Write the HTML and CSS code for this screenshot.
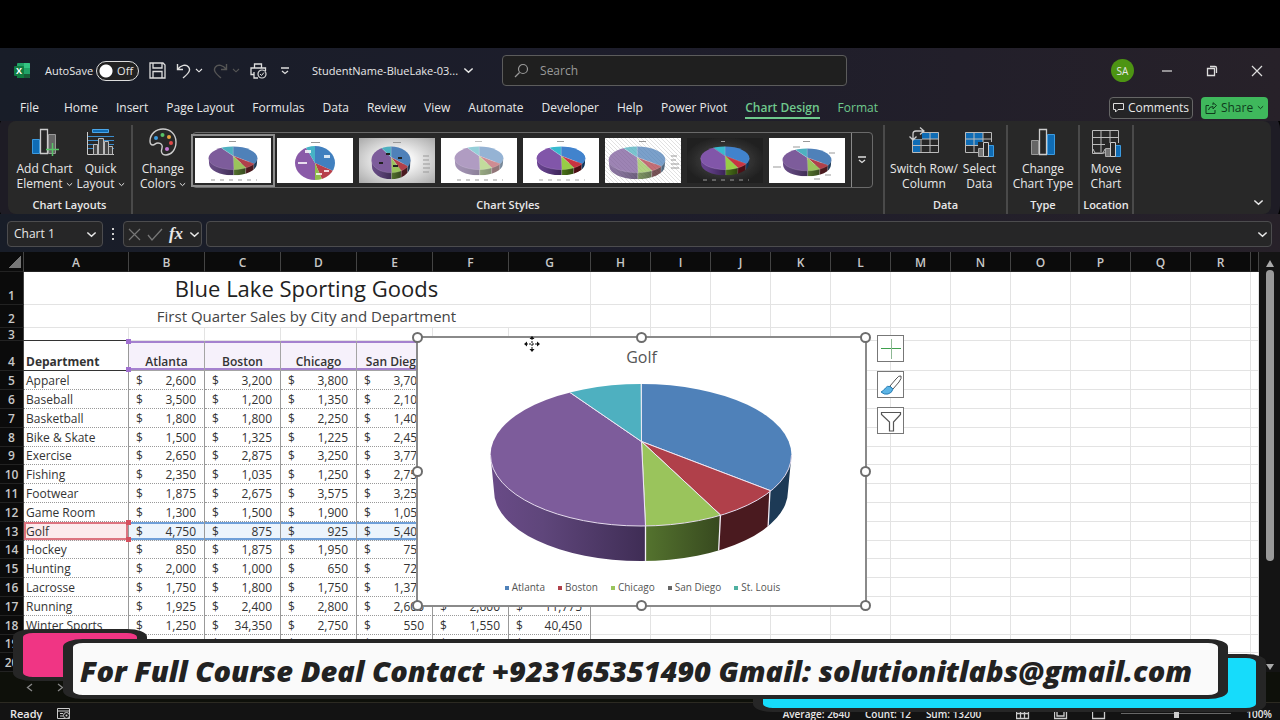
FILE: index.html
```html
<!DOCTYPE html>
<html lang="en">
<head>
<meta charset="utf-8">
<title>StudentName-BlueLake-03 - Excel</title>
<link rel="stylesheet" href="styles.css">
</head>
<body>
<svg class="defs" aria-hidden="true">
  <defs>
    <clipPath id="top"><ellipse cx="224" cy="118" rx="150.5" ry="71"/></clipPath>
    <clipPath id="side"><path d="M73.500 118L77 154A147 70 0 0 0 371 154L374.500 118Z"/></clipPath>
    <clipPath id="disc"><ellipse cx="20" cy="17" rx="20" ry="17"/></clipPath>
    <linearGradient id="gp"><stop offset="0" stop-color="#6a4b88"/><stop offset=".35" stop-color="#5f467b"/><stop offset="1" stop-color="#3f2d55"/></linearGradient>
    <linearGradient id="gg"><stop offset="0" stop-color="#54732e"/><stop offset="1" stop-color="#37491f"/></linearGradient>
    <pattern id="hatch" width="4" height="4" patternUnits="userSpaceOnUse"><path d="M0 0L4 4" stroke="#d4d4d4" stroke-width=".7"/></pattern>
    <symbol id="pie" viewBox="70 44 308 184" preserveAspectRatio="none">
      <g clip-path="url(#side)">
        <path fill="url(#gp)" d="M70 100H228.500V230H70Z"/>
        <path fill="url(#gg)" d="M228.500 150H303.500L301.500 230H228.500Z"/>
        <path fill="#4a1a1f" d="M303.500 140H353L351 230H301.500Z"/>
        <path fill="#1d3a56" d="M353 100H380V230H351Z"/>
        <path stroke="#f3eef6" stroke-width="1.300" fill="none" d="M228.500 189V226M303.500 178L301.500 216M353 153L351 192"/>
      </g>
      <g clip-path="url(#top)" stroke="#efe8f4" stroke-width="1">
        <path fill="#4f81b9" d="M224.500 104.500V40H400V189L353 153.500Z"/>
        <path fill="#b0404a" d="M224.500 104.500L353 153.500L390 182L330 230L303.500 178Z"/>
        <path fill="#9ac45c" d="M224.500 104.500L303.500 178L330 215V240H229.500L228.500 189Z"/>
        <path fill="#7d5c9b" d="M224.500 104.500L228.500 189L229.500 240H50V20H130L153 55.500Z"/>
        <path fill="#4eb0c0" d="M224.500 104.500L153 55.500L130 20H224Z"/>
      </g>
      <ellipse cx="224" cy="118" rx="150.500" ry="71" fill="none" stroke="#e6dcee" stroke-width="1" pathLength="100" stroke-dasharray="50 50"/>
    </symbol>
    <symbol id="flat" viewBox="0 0 40 34">
      <g clip-path="url(#disc)">
        <path fill="#4180bf" d="M20 17V-5H50V30Z"/><path fill="#b8404b" d="M20 17L50 30L32 45Z"/>
        <path fill="#90bd4c" d="M20 17L32 45H20Z"/><path fill="#8a5aa8" d="M20 17V45H-10V-10H4Z"/><path fill="#46b3c6" d="M20 17L4-10H20Z"/>
      </g>
      <g fill="#fff" opacity=".8"><path d="M3 16h9v2H3zM29 9h6v3h-6zM10 4h6v3h-6zM21 27h6v2h-6zM29 24h5v2h-5z"/></g>
    </symbol>
    <symbol id="chev" viewBox="0 0 8 5"><path d="M1 1L4 3.800L7 1" fill="none" stroke="currentColor" stroke-width="1.100"/></symbol>
    <symbol id="bars" viewBox="0 0 16 16"><path fill="#777" stroke="#aaa" d="M.5 7.500h5v8h-5z"/><path fill="#0f6cb5" stroke="#3c9be0" d="M10.500 4.500h5v11h-5z"/><path fill="#282828" stroke="#ccc" d="M5.500 1.500h5v14h-5z"/></symbol>
  </defs>
</svg>

<header class="titlebar">
  <svg class="logo" width="16" height="16" viewBox="0 0 16 16"><rect x="3" width="13" height="15" rx="1" fill="#21a366"/><path fill="#33c481" d="M10 0h5q1 0 1 1v4h-6z"/><path fill="#107c41" d="M3 8h7v7H4q-1 0-1-1z"/><path fill="#185c37" d="M10 11h6v3q0 1-1 1h-5z"/><rect y="3" width="10" height="10" rx="1" fill="#107c41"/><text x="2" y="11" font-size="9">X</text></svg>
  <label class="autosave" for="autosave">AutoSave</label>
  <span class="switch"><input type="checkbox" role="switch" id="autosave"><span aria-hidden="true">Off</span></span>
  <button class="ib save" aria-label="Save"><svg width="17" height="17" viewBox="0 0 17 17"><path fill="none" stroke="#ddd" stroke-width="1.300" d="M1 1h13l2 2v13H1zM4 1v5h9V1M4 16V9.500h9V16"/></svg></button>
  <button class="ib undo" aria-label="Undo"><svg width="15" height="16" viewBox="0 0 15 16"><path fill="none" stroke="#ddd" stroke-width="1.400" d="M1.500 1v5.500h5.500M1.500 6.500C5 2 10 1 12.500 4S13 10 7 15"/></svg><svg width="8" height="5"><use href="#chev"/></svg></button>
  <button class="ib redo" aria-label="Redo" disabled><svg width="15" height="16" viewBox="0 0 15 16"><path fill="none" stroke="currentColor" stroke-width="1.400" d="M13.500 1v5.500h-5.500M13.500 6.500C10 2 5 1 2.500 4S2 10 8 15"/></svg><svg width="8" height="5"><use href="#chev"/></svg></button>
  <button class="ib print" aria-label="Print preview"><svg width="17" height="16" viewBox="0 0 17 16"><path fill="none" stroke="#ddd" stroke-width="1.300" d="M4.500 5V1h7v4M4 11.500H1V5h14.500v3M4 9v6h4"/><circle cx="12" cy="11" r="4" fill="#1b1f2a" stroke="#ddd" stroke-width="1.200"/><path fill="none" stroke="#ddd" d="M10 11l1.500 1.500L14 9.500"/></svg></button>
  <button class="ib more" aria-label="Customize Quick Access Toolbar"><svg width="8" height="8" viewBox="0 0 8 8"><path stroke="#ddd" fill="none" stroke-width="1.300" d="M0 1h8M1 4l3 2.500L7 4"/></svg></button>
  <button class="filename">StudentName-BlueLake-03... <svg width="11" height="7"><use href="#chev"/></svg></button>
  <label class="search"><svg width="15" height="15" viewBox="0 0 15 15"><circle cx="9" cy="6" r="4.500" fill="none" stroke="#999" stroke-width="1.200"/><path stroke="#999" stroke-width="1.200" d="M5.500 9.500L1 14"/></svg><input type="text" placeholder="Search" aria-label="Search"></label>
  <span class="spacer"></span>
  <button class="avatar" aria-label="Account SA">SA</button>
  <button class="wb" aria-label="Minimize"><svg width="12" height="12"><path stroke="#ddd" stroke-width="1.200" d="M1 6h10"/></svg></button>
  <button class="wb" aria-label="Restore"><svg width="12" height="12" viewBox="0 0 12 12"><path fill="none" stroke="#ddd" stroke-width="1.300" d="M1.500 3.500h7v7h-7zM4 1.500h5q1.500 0 1.500 1.500v5"/></svg></button>
  <button class="wb" aria-label="Close"><svg width="12" height="12"><path stroke="#ddd" stroke-width="1.200" d="M1 1l10 10M11 1L1 11"/></svg></button>
</header>

<nav class="tabs">
  <a href="#" class="file">File</a><a href="#">Home</a><a href="#">Insert</a><a href="#">Page Layout</a><a href="#">Formulas</a><a href="#">Data</a><a href="#">Review</a><a href="#">View</a><a href="#">Automate</a><a href="#">Developer</a><a href="#">Help</a><a href="#">Power Pivot</a><a href="#" class="ctx on">Chart Design</a><a href="#" class="ctx">Format</a>
  <span class="spacer"></span>
  <button class="comments"><svg width="11" height="11" viewBox="0 0 11 11"><path fill="none" stroke="#ddd" d="M.5 1.500h10v6H5L2.500 10V7.500h-2z"/></svg>Comments</button>
  <button class="share"><svg width="12" height="12" viewBox="0 0 12 12"><path fill="none" stroke="#0f3a1c" d="M4 3.500H1v8h9V8M3.500 8Q4 4.500 8 4.500V7l3.500-3.500L8 .7V3"/></svg>Share<svg width="7" height="5"><use href="#chev"/></svg></button>
</nav>

<section class="ribbon" aria-label="Chart Design">
  <div class="group layouts">
    <div class="cmds">
      <button class="cmd"><svg width="28" height="30" viewBox="0 0 28 30"><path fill="#0f6cb5" stroke="#3c9be0" d="M1.500 12.500h7v14h-7z"/><path fill="#666" stroke="#999" d="M17.500 7.500h7v19h-7z"/><path fill="#282828" stroke="#ccc" stroke-width="1.300" d="M9.500 2.500h7v24h-7z"/><path stroke="#57c466" stroke-width="1.500" d="M21.500 16v13M15 22.500h13"/></svg><span>Add Chart<br>Element <svg width="7" height="5"><use href="#chev"/></svg></span></button>
      <button class="cmd"><svg width="28" height="30" viewBox="0 0 28 30"><path fill="#0f6cb5" stroke="#4ba6e8" d="M5.500 2.500h16v3h-16z"/><path stroke="#3c8ccb" d="M1 9.500h26M1 13.500h26M1 17.500h26M1 21.500h26"/><path fill="none" stroke="#ccc" d="M.5 5v22.500H27"/><path fill="#444" stroke="#bbb" d="M6.500 17.500h4v10h-4zM11.500 11.500h5v16h-5zM17.500 14.500h4v13h-4zM21.500 19.500h4v8h-4z"/></svg><span>Quick<br>Layout <svg width="7" height="5"><use href="#chev"/></svg></span></button>
    </div>
    <h2>Chart Layouts</h2>
  </div>
  <div class="group styles">
    <div class="cmds">
      <button class="cmd colors"><svg width="28" height="30" viewBox="0 0 28 30"><path fill="none" stroke="#ccc" stroke-width="1.400" d="M1 14C1 7 7 2 14 2s13 5 13 13-5 13-10 13-5-4-4-7-1-5-4-5-3 2-5 2-3-1-3-4z"/><circle cx="7" cy="11" r="2" fill="#3c9be0"/><circle cx="13.500" cy="8" r="2" fill="#57c466"/><circle cx="20" cy="10" r="2" fill="#e8a33c"/><circle cx="22" cy="16" r="2" fill="#e04848"/><circle cx="18" cy="22" r="2" fill="#c679d6"/></svg><span>Change<br>Colors <svg width="7" height="5"><use href="#chev"/></svg></span></button>
      <div class="gallery">
        <button class="thumb on" aria-label="Style 1"><svg viewBox="0 0 76 45"><path class="cap" d="M34 3.500h7"/><use href="#pie" x="13" y="8" width="50" height="30"/><path class="leg" d="M16 42h46"/></svg></button>
        <button class="thumb" aria-label="Style 2"><svg viewBox="0 0 76 45"><path class="cap" d="M34 4.500h9"/><use href="#flat" x="18" y="8" width="40" height="34"/></svg></button>
        <button class="thumb silver" aria-label="Style 3"><svg viewBox="0 0 76 45"><path class="cap" d="M34 4.500h8"/><use href="#pie" x="12" y="8" width="40" height="34"/><path class="cap" d="M64 18h6M64 22h6M64 26h7M64 30h7M64 34h6"/><path stroke="#222" stroke-width="2" d="M20 25h4M27 16h4M39 20h4M34 28h5"/></svg></button>
        <button class="thumb" aria-label="Style 4"><svg viewBox="0 0 76 45"><g opacity=".6"><path class="cap" d="M34 3.500h7"/><use href="#pie" x="13" y="8" width="50" height="30"/></g><path class="leg" d="M16 42h46"/></svg></button>
        <button class="thumb vivid" aria-label="Style 5"><svg viewBox="0 0 76 45"><path class="cap" d="M34 3.500h7"/><use href="#pie" x="13" y="8" width="50" height="30"/><path class="leg" d="M16 42h46"/></svg></button>
        <button class="thumb" aria-label="Style 6"><svg viewBox="0 0 76 45"><path fill="url(#hatch)" d="M0 0h76v45H0z"/><path class="cap" d="M34 3.500h7"/><use href="#pie" x="3" y="8" width="58" height="34" opacity=".75"/><path class="cap" d="M66 18h6M66 22h5M66 26h8M66 30h8"/></svg></button>
        <button class="thumb night vivid" aria-label="Style 7"><svg viewBox="0 0 76 45"><path class="leg" d="M34 3.500h7M16 42h46"/><use href="#pie" x="13" y="8" width="50" height="30"/></svg></button>
        <button class="thumb" aria-label="Style 8"><svg viewBox="0 0 76 45"><path class="cap" d="M34 3.500h7"/><use href="#pie" x="13" y="10" width="50" height="29"/><path class="cap" d="M24 9h7M60 15h6M4 29h8M56 37h6M45 41h6"/></svg></button>
        <button class="expand" aria-label="More styles"><svg width="8" height="8" viewBox="0 0 8 8"><path stroke="#ddd" fill="none" stroke-width="1.300" d="M0 1h8M1 4l3 2.500L7 4"/></svg></button>
      </div>
    </div>
    <h2>Chart Styles</h2>
  </div>
  <div class="group data">
    <div class="cmds">
      <button class="cmd"><svg width="30" height="30" viewBox="0 0 30 30"><path fill="#0f6cb5" d="M4 5h26v7H11v13H4z"/><path fill="none" stroke="#bbb" d="M3.500 5.500h26v20h-26zM3.500 12h26M3.500 18.500h26M12 5v20M21 5v20"/><path fill="#282828" d="M0 0h13v12H0z"/><path fill="none" stroke="#ccc" stroke-width="1.300" d="M4 13V7q0-3 3-3h8M11 .5l4 3.500-4 3.500M.5 9.500L4 13l3.500-3.500"/></svg><span>Switch Row/<br>Column</span></button>
      <button class="cmd"><svg width="30" height="30" viewBox="0 0 30 30"><path fill="#0f6cb5" d="M1 5h18v14H1z"/><path fill="none" stroke="#bbb" d="M1.500 5.500h26v20h-26zM1.500 12h26M1.500 18.500h26M10 5v20M19 5v20"/><path fill="#282828" d="M14 15h16v15H14z"/><use href="#bars" x="14" y="14" width="16" height="16"/></svg><span>Select<br>Data</span></button>
    </div>
    <h2>Data</h2>
  </div>
  <div class="group type">
    <div class="cmds">
      <button class="cmd"><svg width="28" height="30" viewBox="0 0 28 30"><path fill="#666" stroke="#999" d="M2.500 13.500h7v14h-7z"/><path fill="#0f6cb5" stroke="#3c9be0" d="M18.500 7.500h7v20h-7z"/><path fill="#282828" stroke="#ccc" stroke-width="1.300" d="M10.500 2.500h7v25h-7z"/></svg><span>Change<br>Chart Type</span></button>
    </div>
    <h2>Type</h2>
  </div>
  <div class="group location">
    <div class="cmds">
      <button class="cmd"><svg width="30" height="30" viewBox="0 0 30 30"><path fill="none" stroke="#bbb" d="M1.500 3.500h26v22h-13l-3 1h-10zM1.500 10.500h26M1.500 17.500h26M10 3v22M19 3v22M2 22l2 4h8l2-4"/><path fill="#282828" d="M14 16h16v14H14z"/><use href="#bars" x="14" y="14" width="16" height="16"/></svg><span>Move<br>Chart</span></button>
    </div>
    <h2>Location</h2>
  </div>
  <span class="spacer"></span>
  <button class="collapse" aria-label="Collapse ribbon"><svg width="11" height="7"><use href="#chev"/></svg></button>
</section>

<section class="formulabar">
  <div class="namebox"><input type="text" value="Chart 1" aria-label="Name box"><svg width="11" height="7"><use href="#chev"/></svg></div>
  <svg class="dots" width="4" height="14" viewBox="0 0 4 14"><path fill="#ccc" d="M1 1h2v2H1zM1 6h2v2H1zM1 11h2v2H1z"/></svg>
  <div class="fx">
    <button aria-label="Cancel"><svg width="13" height="13"><path stroke="#777" stroke-width="1.200" d="M1 1l11 11M12 1L1 12"/></svg></button>
    <button aria-label="Enter"><svg width="16" height="13"><path fill="none" stroke="#777" stroke-width="1.300" d="M1 7l4 5L15 1"/></svg></button>
    <button class="fn" aria-label="Insert function">fx</button>
    <svg width="11" height="7"><use href="#chev"/></svg>
  </div>
  <div class="formula"><input type="text" aria-label="Formula bar"><svg width="11" height="7"><use href="#chev"/></svg></div>
</section>

<main class="sheet">
  <div class="grid">
    <table>
      <colgroup><col class="c-num"><col class="c-a"><col class="c-b" span="5"><col class="c-g"><col class="c-h" span="11"><col></colgroup>
      <thead><tr id="letters"></tr></thead>
      <tbody id="rows"></tbody>
    </table>
    <figure class="chart">
      <figcaption>Golf</figcaption>
      <svg class="plot" viewBox="70 44 308 184"><use href="#pie" x="70" y="44" width="308" height="184"/></svg>
      <ul><li class="k1">Atlanta</li><li class="k2">Boston</li><li class="k3">Chicago</li><li class="k4">San Diego</li><li class="k5">St. Louis</li></ul>
      <i class="h nw"></i><i class="h n"></i><i class="h ne"></i><i class="h w"></i><i class="h e"></i><i class="h sw"></i><i class="h s"></i><i class="h se"></i>
      <svg class="cursor" width="16" height="16" viewBox="0 0 16 16"><path stroke="#111" stroke-dasharray="2 1" d="M8 2v12M2 8h12"/><path fill="#111" d="M8 0l2.500 3h-5zM8 16l2.500-3h-5zM0 8l3-2.500v5zM16 8l-3-2.500v5z"/></svg>
      <div class="tools">
        <button aria-label="Chart elements"><svg width="24" height="24"><path stroke="#3fa04e" d="M2 11.500h20"/><path stroke="#8db894" d="M12.500 2v20"/></svg></button>
        <button aria-label="Chart styles"><svg width="24" height="24" viewBox="0 0 24 24"><path fill="#fff" stroke="#555" d="M22 3q-2-1-5 3l-6 7 3 3 6-7q3-4 2-6z"/><path fill="#5bb4e5" stroke="#2b7fb5" d="M11 13.500q-3-1-4.500 1.500T2 19q3 3 7 2t5-5z"/></svg></button>
        <button aria-label="Chart filters"><svg width="24" height="24"><path fill="none" stroke="#555" stroke-width="1.200" d="M2.500 3.500h19v2L14.500 13v9h-4v-9L2.500 5.500z"/></svg></button>
      </div>
    </figure>
  </div>
  <div class="scroll"><svg width="10" height="7"><path fill="#aaa" d="M5 0l4 7H1z"/></svg><span></span><svg class="down" width="8" height="6"><path fill="#aaa" d="M0 0h8L4 6z"/></svg></div>
</main>
<div class="sheettabs"><button aria-label="Previous sheet"><svg width="7" height="9"><path fill="none" stroke="#888" stroke-width="1.300" d="M6 1L1.500 4.500 6 8"/></svg></button><button aria-label="Next sheet"><svg width="7" height="9"><path fill="none" stroke="#888" stroke-width="1.300" d="M1 1l4.500 3.500L1 8"/></svg></button></div>
<footer class="status">
  <span class="ready">Ready</span>
  <svg width="14" height="12" viewBox="0 0 14 12"><path fill="none" stroke="#ccc" d="M.5.500h12v10H.500zM.500 3h12M3 5.500h3M3 8h3"/><circle cx="9.500" cy="7.500" r="3" fill="#151515" stroke="#ccc"/><circle cx="9.500" cy="7.500" r="1" fill="#ccc"/></svg>
  <span class="spacer"></span>
  <span>Average: 2640</span><span>Count: 12</span><span class="sum">Sum: 13200</span>
  <svg class="view" width="14" height="12"><path fill="none" stroke="#ccc" stroke-width="1.300" d="M.5.500h12v10H.500zM.500 5.500h12M4.500.500v10M8.500.500v10"/></svg>
  <svg class="view" width="14" height="12"><path fill="none" stroke="#ccc" stroke-width="1.300" d="M.5.500h12v10H.500zM3 3h7v5H3z"/></svg>
  <svg width="14" height="12"><path fill="none" stroke="#ccc" stroke-width="1.300" d="M.5.500h12v10H.500z"/></svg>
  <input type="range" aria-label="Zoom"><span>100%</span>
</footer>

<div class="banner">
  <div class="pink"></div><div class="cyan"></div>
  <p>For Full Course Deal Contact +923165351490 Gmail: solutionitlabs@gmail.com</p>
</div>
<script src="script.js"></script>
</body>
</html>
```

FILE: styles.css
```css
* { box-sizing: border-box; }
body { margin: 0; height: 100vh; overflow: hidden; display: flex; flex-direction: column; position: relative; padding-top: 48px; background: #000; color: #e8e8e8; font: 12px/18px "Open Sans", "Noto Sans", sans-serif; }
button, input { font: inherit; color: inherit; background: none; border: 0; padding: 0; margin: 0; min-width: 0; }
button { display: inline-flex; align-items: center; justify-content: center; white-space: nowrap; }
svg { display: block; flex: none; }
.defs { position: absolute; width: 0; height: 0; }
.spacer { flex: 1; }

.titlebar, .tabs, .formulabar { background: linear-gradient(90deg, #181d28, #1d1d2b 50%, #272129); display: flex; align-items: center; flex: none; }
.titlebar { height: 44px; padding: 1px 1px 0 14px; }
.logo { margin-right: 15px; }
.logo text { fill: #fff; font-weight: 700; }
.autosave { margin-right: 3px; font-size: 11px; font-weight: 500; }
.switch { position: relative; width: 43px; height: 20px; flex: none; }
.switch input { appearance: none; display: block; width: 43px; height: 20px; border: 1px solid #ddd; border-radius: 10px; background: radial-gradient(circle at 9px 9px, #fff 6px, #222 7px); }
.switch span { position: absolute; right: 6px; top: 1px; font-size: 11px; pointer-events: none; }
.ib { gap: 4px; }
.save { margin-left: 10px; }
.undo { margin-left: 10px; }
.redo { margin-left: 10px; color: #555; }
.print { margin-left: 10px; }
.more { margin-left: 14px; }
.filename { margin-left: 23px; gap: 5px; font-size: 11px; font-weight: 500; }
.search { display: flex; align-items: center; gap: 11px; width: 345px; height: 31px; margin-left: 28px; padding-left: 11px; border: 1px solid #5c5c5c; border-radius: 4px; background: #1f1f1f; }
.search input { flex: 1; }
.search input::placeholder { color: #999; opacity: 1; }
.avatar { width: 23px; height: 23px; border-radius: 50%; background: #4d9413; font-size: 10px; margin-right: 10px; }
.wb { width: 45px; height: 32px; }

.tabs { height: 29px; padding: 2px 12px 0 20px; gap: 18px; }
.tabs a { color: inherit; text-decoration: none; line-height: 18px; padding-top: 2px; border-bottom: 2px solid transparent; white-space: nowrap; }
.tabs .file { margin-right: 7px; }
.tabs .ctx { color: #6fc98d; }
.tabs .on { font-weight: 600; border-color: #6fc98d; }
.comments, .share { height: 22px; border-radius: 4px; gap: 4px; }
.comments { border: 1px solid #666; background: #242426; width: 84px; }
.share { background: #3fb85c; color: #0f3a1c; width: 67px; margin-left: -10px; }

.ribbon { flex: none; display: flex; height: 93px; margin: 0 9px 0 8px; border-radius: 8px; background: #282828; box-shadow: 0 0 0 9px #1e1c25; position: relative; clip-path: inset(0 -9px); }
.group { display: flex; flex-direction: column; flex: none; border-right: 2px solid #4a4a4a; margin-top: 4px; }
.group h2 { margin: auto 0 0; font-size: 11px; line-height: 18px; font-weight: 600; text-align: center; }
.cmds { display: flex; justify-content: center; padding-top: 2px; }
.cmd { flex-direction: column; line-height: 15px; }
.cmd > span { text-align: center; padding-top: 4px; }
.cmd span svg { display: inline-block; vertical-align: middle; }
.layouts { width: 125px; }
.layouts .cmds { gap: 4px; padding-left: 2px; }
.styles { width: 752px; }
.styles .cmds { justify-content: flex-start; padding-left: 7px; align-items: flex-start; gap: 6px; }
.gallery { display: flex; align-items: center; flex: none; height: 56px; margin-top: 5px; border: 1px solid #6a6a6a; border-radius: 4px; padding-left: 2px; }
.thumb { width: 76px; height: 45px; margin-right: 6px; background: #fff; flex: none; }
.thumb svg { width: 76px; height: 45px; }
.thumb.on { outline: 2px solid #8d8d8d; outline-offset: 2px; }
.silver { background: radial-gradient(#f5f5f5 30%, #a9a9a9); }
.night { background: radial-gradient(#555, #292929 75%); }
.vivid { filter: saturate(1.2) contrast(1.1); }
.cap, .leg { stroke: #999; stroke-width: 1; fill: none; }
.leg { stroke-dasharray: 4 5; }
.expand { width: 21px; align-self: stretch; border-left: 1px solid #8a8a8a; }
.data { width: 123px; }
.data .cmds { gap: 5px; padding-right: 5px; }
.type { width: 72px; }
.location { width: 54px; }
.collapse { align-self: flex-end; margin: 0 7px 8px 0; }

.formulabar { height: 38px; padding: 7px 8px 5px 7px; align-items: stretch; }
.namebox, .fx, .formula { display: flex; align-items: center; border: 1px solid #4c4c4e; border-radius: 4px; background: #262627; height: 26px; }
.namebox { width: 96px; padding: 0 5px 0 6px; }
.namebox input { flex: 1; }
.dots { margin: 6px 8px 0 8px; }
.fx { width: 79px; justify-content: space-between; padding: 0 1px 0 4px; }
.fn { font: italic 700 17px/20px "Liberation Serif", serif; }
.formula { flex: 1; margin-left: 4px; padding-right: 3px; }
.formula input { flex: 1; }

.sheet { flex: 1; min-height: 0; display: flex; background: #0c0c0c; }
.grid { flex: 1; position: relative; background: #fff; height: 100%; overflow: hidden; color: #333; }
table { width: 100%; table-layout: fixed; border-spacing: 0; line-height: 16px; }
.c-num { width: 24px; } .c-a { width: 105px; } .c-b { width: 76px; } .c-g { width: 82px; } .c-h { width: 60px; }
thead tr { height: 20px; }
th { background: #0b0b0b; color: #c8c8c8; font-weight: 600; padding: 0; border-right: 1px solid #444; border-bottom: 1px solid #222; }
thead th { padding-top: 2px; }
thead th:first-child { background: linear-gradient(135deg, #0b0b0b 50%, #777 50%) 9px 4px / 12px 12px no-repeat #0b0b0b; }
tbody th { vertical-align: bottom; line-height: 17px; font-size: 12px; }
td { padding: 0 8px 0 7px; border-right: 1px solid #e3e3e3; border-bottom: 1px solid #e3e3e3; position: relative; vertical-align: bottom; white-space: nowrap; }
.r1 { height: 33px; } .r2 { height: 23px; } .r3 { height: 13px; } .r4 { height: 30px; } .r { height: 19px; } .r.short { height: 18px; }
.r3 th { line-height: 11px; }
.title { font-size: 22px; line-height: 31px; text-align: center; color: #222; }
.sub { font-size: 15px; line-height: 21px; text-align: center; color: #444; }
.head { font-weight: 600; text-align: center; border-color: #a4a4a4; padding: 0; }
.name { padding: 0 0 0 2px; border-color: #999; border-bottom-style: dotted; }
.head.name { text-align: left; font-weight: 700; border-bottom: 1px solid #333; }
.r3 td:nth-child(2) { border-bottom-color: #333; }
.money { border-color: #999; border-bottom-style: dotted; }
.money div { display: flex; justify-content: space-between; }
.pick4 { background: #f6f1fb; box-shadow: inset 0 2px #a582cf, inset 0 -2px #a582cf; }
.pickA { background: #fcebed; box-shadow: inset 0 0 0 2px #dc7480; }
.pickB { background: #ecf4fc; box-shadow: inset 0 2px #6f9fd8, inset 0 -2px #6f9fd8; }
.knob { position: absolute; width: 5px; height: 5px; background: #a06fd0; left: -3px; z-index: 1; }
.pickA .knob { background: #d5505f; left: auto; right: -3px; }
.knob.t { top: -2px; } .knob.b { bottom: -2px; }

.chart { position: absolute; left: 416px; top: 84px; width: 451px; height: 271px; margin: 0; background: #fff; border: 2px solid #8a8a8a; display: flex; flex-direction: column; align-items: center; color: #555; z-index: 2; }
.chart figcaption { font-size: 16px; line-height: 20px; margin-top: 9px; }
.plot { width: 308px; height: 184px; margin: 14px 2px 0 0; }
.chart ul { list-style: none; display: flex; gap: 13px; margin: 13px 0 0; padding: 0 0 0 2px; font-size: 10px; line-height: 18px; }
.chart li::before { content: ""; display: inline-block; width: 4px; height: 4px; margin-right: 3px; vertical-align: middle; background: #4f81b9; }
.chart .k2::before { background: #b0404a; } .chart .k3::before { background: #9ac45c; } .chart .k4::before { background: #666; } .chart .k5::before { background: #4eb0a0; }
.h { position: absolute; width: 11px; height: 11px; border: 2px solid #6d6d6d; border-radius: 50%; background: #fff; }
.nw, .n, .ne { top: -6px; } .w, .e { top: 128px; } .sw, .s, .se { bottom: -6px; }
.nw, .w, .sw { left: -6px; } .n, .s { left: 218px; } .ne, .e, .se { right: -6px; }
.cursor { position: absolute; left: 106px; top: -2px; }
.tools { position: absolute; left: 459px; top: -3px; display: flex; flex-direction: column; gap: 9px; }
.tools button { width: 27px; height: 27px; border: 1px solid #777; background: #fff; }
.scroll { width: 21px; flex: none; display: flex; flex-direction: column; align-items: center; padding-top: 8px; background: #141414; }
.scroll span { width: 8px; height: 291px; margin-top: 3px; border-radius: 4px; background: #999; }
.scroll .down { margin-top: auto; margin-bottom: 2px; }

.sheettabs { height: 30px; flex: none; background: #0e100a; display: flex; align-items: center; gap: 24px; padding-left: 26px; }
.status { height: 18px; flex: none; display: flex; align-items: center; background: #131313; border-top: 1px solid #2c2a22; padding: 4px 8px 0 10px; font-size: 10px; line-height: 18px; gap: 15px; white-space: nowrap; font-weight: 600; }
.ready { font-size: 11px; }
.sum { margin-right: 20px; }
.view { margin-right: 9px; }
.status input { width: 110px; height: 8px; accent-color: #aaa; appearance: none; background: linear-gradient(#666, #666) center / 100% 1px no-repeat; }
.status input::-webkit-slider-thumb { appearance: none; width: 5px; height: 8px; background: #ccc; }

.banner { position: absolute; left: 0; right: 0; top: 628px; height: 92px; pointer-events: none; z-index: 3; }
.banner div, .banner p { position: absolute; margin: 0; border: solid #262626; border-width: 4px 10px; border-radius: 20px / 8px; }
.pink { left: 13px; top: 1px; width: 134px; height: 52px; background: #f03584; }
.cyan { left: 753px; right: 14px; top: 26px; height: 58px; background: #16dcfb; }
.banner p { left: 63px; right: 52px; top: 11px; height: 60px; background: #fafafa; color: #222; font-size: 29px; line-height: 56px; font-weight: 800; font-style: italic; white-space: nowrap; padding-left: 7px; }
```

FILE: script.js
```js
const data = [
  ["Apparel", "2,600", "3,200", "3,800", "3,700"],
  ["Baseball", "3,500", "1,200", "1,350", "2,100"],
  ["Basketball", "1,800", "1,800", "2,250", "1,400"],
  ["Bike & Skate", "1,500", "1,325", "1,225", "2,450"],
  ["Exercise", "2,650", "2,875", "3,250", "3,775"],
  ["Fishing", "2,350", "1,035", "1,250", "2,750"],
  ["Footwear", "1,875", "2,675", "3,575", "3,250"],
  ["Game Room", "1,300", "1,500", "1,900", "1,050"],
  ["Golf", "4,750", "875", "925", "5,400"],
  ["Hockey", "850", "1,875", "1,950", "750"],
  ["Hunting", "2,000", "1,000", "650", "725"],
  ["Lacrosse", "1,750", "1,800", "1,750", "1,375"],
  ["Running", "1,925", "2,400", "2,800", "2,600", "2,000", "11,775"],
  ["Winter Sports", "1,250", "34,350", "2,750", "550", "1,550", "40,450"],
  ["Total", "30,100", "57,910", "29,425", "31,875", "20,175", "169,485"]
];
const blank = n => "<td></td>".repeat(n);
const knobs = '<i class="knob t"></i><i class="knob b"></i>';

document.getElementById("letters").innerHTML =
  "<th></th>" + [..."ABCDEFGHIJKLMNOPQR"].map(c => `<th>${c}</th>`).join("") + "<th></th>";

let html = `<tr class="r1"><th>1</th><td class="title" colspan="7">Blue Lake Sporting Goods</td>${blank(12)}</tr>`;
html += `<tr class="r2"><th>2</th><td class="sub" colspan="7">First Quarter Sales by City and Department</td>${blank(12)}</tr>`;
html += `<tr class="r3"><th>3</th>${blank(19)}</tr>`;
html += '<tr class="r4"><th>4</th><td class="head name">Department</td>' +
  ["Atlanta", "Boston", "Chicago", "San Diego", "St. Louis"].map((c, i) =>
    `<td class="head pick4">${i ? "" : knobs}${c}</td>`).join("") +
  `<td class="head">Total</td>${blank(12)}</tr>`;

data.forEach((row, i) => {
  const n = i + 5, golf = n === 13;
  html += `<tr class="r${n % 5 === 4 ? " short" : ""}"><th>${n}</th>`;
  html += `<td class="name${golf ? " pickA" : ""}">${row[0].replace("&", "&amp;")}${golf ? knobs : ""}</td>`;
  for (let c = 1; c < 7; c++) {
    const v = row[c] ? `<div><span>$</span><span>${row[c]}</span></div>` : "";
    html += `<td class="money${golf && c < 6 ? " pickB" : ""}">${v}</td>`;
  }
  html += blank(12) + "</tr>";
});
html += `<tr class="r"><th>20</th>${blank(19)}</tr>`;
document.getElementById("rows").innerHTML = html;
```
